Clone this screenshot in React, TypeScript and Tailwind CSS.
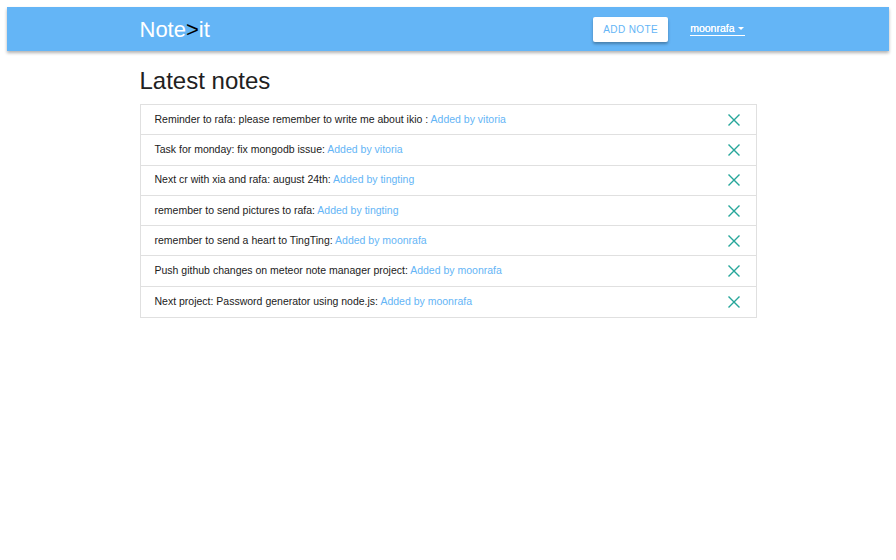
import React from "react";

const notes = [
  { text: "Reminder to rafa: please remember to write me about ikio :", by: "vitoria" },
  { text: "Task for monday: fix mongodb issue:", by: "vitoria" },
  { text: "Next cr with xia and rafa: august 24th:", by: "tingting" },
  { text: "remember to send pictures to rafa:", by: "tingting" },
  { text: "remember to send a heart to TingTing:", by: "moonrafa" },
  { text: "Push github changes on meteor note manager project:", by: "moonrafa" },
  { text: "Next project: Password generator using node.js:", by: "moonrafa" },
];

// little teal close icon on each row
const CloseIcon = () => (
  <svg width="12" height="12" viewBox="0 0 12 12" className="text-[#26a69a]">
    <path d="M1 1L11 11M11 1L1 11" stroke="currentColor" strokeWidth="1.4" strokeLinecap="square" />
  </svg>
);

const App: React.FC = () => {
  return (
    <div className="min-h-[560px] bg-white p-[7px] font-['Liberation_Sans',Arial,sans-serif]">
      <nav className="h-[44px] bg-[#64b5f6] shadow-[0_2px_3px_rgba(0,0,0,0.3)]">
        <div className="mx-auto flex h-full w-[617px] items-center">
          <span className="text-[22px] text-white">
            Note<span className="text-black">&gt;</span>it
          </span>
          <div className="ml-auto flex items-center">
            <button className="h-[25px] w-[75px] rounded-[2px] bg-white text-[10px] tracking-[0.4px] text-[#64b5f6] shadow-[0_2px_3px_rgba(0,0,0,0.3)]">
              ADD NOTE
            </button>
            <a className="ml-[22px] mr-[12px] flex items-center gap-[3px] border-b border-white pr-[1px] text-[10.5px] leading-[13px] text-white [text-shadow:0_0_0.4px_white]">
              moonrafa
              <svg width="6" height="4" viewBox="0 0 6 4">
                <path d="M0 0H6L3 3Z" fill="white" />
              </svg>
            </a>
          </div>
        </div>
      </nav>

      <main className="mx-auto w-[617px]">
        <h1 className="mt-[16px] mb-[9px] text-[24px] leading-[28px] text-[#212121]">Latest notes</h1>
        <ul className="border border-[#e0e0e0]">
          {notes.map((n, i) => (
            <li
              key={i}
              className="flex h-[30.3px] items-center border-b border-[#e0e0e0] pl-[14px] pr-[16px] text-[10.5px] text-[#212121] last:border-b-0"
            >
              <span>
                {n.text} <span className="text-[#64b5f6]">Added by {n.by}</span>
              </span>
              <span className="ml-auto flex">
                <CloseIcon />
              </span>
            </li>
          ))}
        </ul>
      </main>
    </div>
  );
};

export default App;
